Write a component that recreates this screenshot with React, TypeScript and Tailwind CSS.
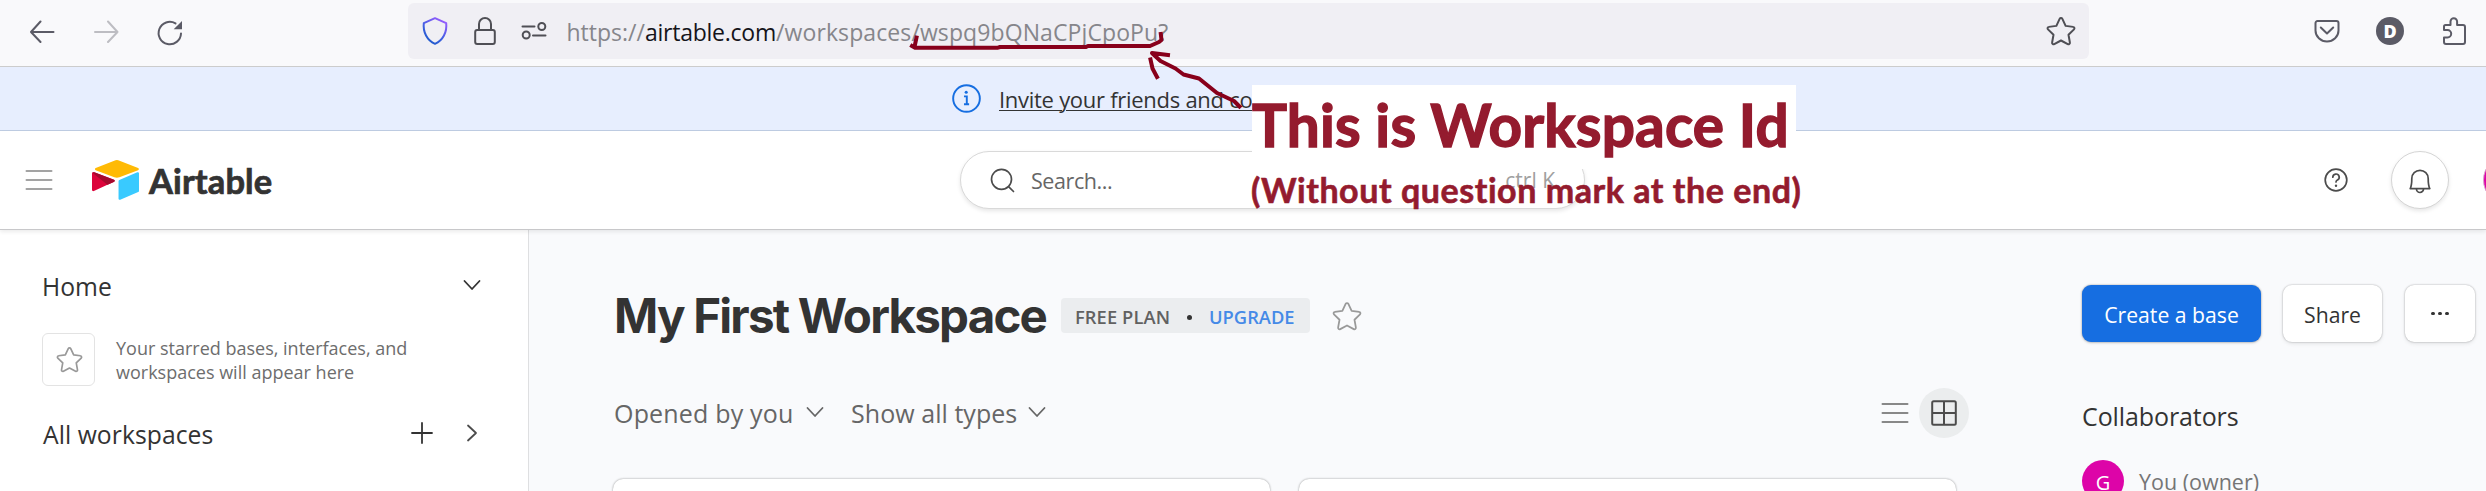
import React from "react";

const STAR =
  "M12 1.6c.5 0 .9.3 1.1.7l2.6 5.6 6 .8c1 .1 1.4 1.3.7 2l-4.4 4.3 1.1 6.2c.2 1-.8 1.7-1.7 1.3L12 19.6l-5.4 2.9c-.9.4-1.9-.3-1.7-1.3L6 15 1.600 10.700c-.7-.7-.3-1.900.7-2l6-.8 2.600-5.600c.2-.4.6-.7 1.100-.7z";

function Star({ className, sw = 1.6 }: { className: string; sw?: number }) {
  return (
    <svg viewBox="0 0 24 24" className={className} fill="none" stroke="currentColor" strokeWidth={sw} strokeLinejoin="round">
      <path d={STAR} />
    </svg>
  );
}

function ChevronDown({ className }: { className: string }) {
  return (
    <svg viewBox="0 0 18 12" className={className} fill="none" stroke="currentColor" strokeWidth="1.8" strokeLinecap="round" strokeLinejoin="round">
      <path d="M1.500 2l7.500 8 7.500-8" />
    </svg>
  );
}

function BrowserBar() {
  return (
    <div className="flex h-[67px] shrink-0 items-start border-b border-[#cccccc] bg-[#f9f9fb] pl-[30px] pt-[3px] text-[#5b5b66]">
      <div className="flex h-14 w-[378px] shrink-0 items-center">
        <svg viewBox="0 0 25 24" className="h-6 w-[25px]" fill="none" stroke="currentColor" strokeWidth="2" strokeLinecap="round" strokeLinejoin="round">
          <path d="M1 13H23.500M10.500 2.500L1 13l9.500 10" />
        </svg>
        <svg viewBox="0 0 25 24" className="ml-[39px] h-6 w-[25px] text-[#bdbdc2]" fill="none" stroke="currentColor" strokeWidth="2" strokeLinecap="round" strokeLinejoin="round">
          <path d="M1 13H23.500M14 2.500L23.500 13 14 23" />
        </svg>
        <svg viewBox="0 0 27 28" className="ml-[37px] mt-1 h-7 w-[27px]" fill="none" stroke="currentColor" strokeWidth="2" strokeLinecap="round">
          <path d="M19.500 4.400A11.200 11.200 0 1 0 25 14.500" />
          <path d="M26 2v8.300h-8.300z" fill="currentColor" stroke="none" />
        </svg>
      </div>
      <div className="flex h-14 w-[1681px] shrink-0 items-center rounded-[6px] bg-[#f0eff4]">
        <svg viewBox="0 0 26 28" className="ml-[14px] h-7 w-[26px]" fill="none">
          <defs>
            <linearGradient id="shield" x1="0.8" y1="0" x2="0.2" y2="1">
              <stop offset="0" stopColor="#9a5cff" />
              <stop offset=".6" stopColor="#3c5fe0" />
              <stop offset="1" stopColor="#1c5ac8" />
            </linearGradient>
          </defs>
          <path d="M13 1.200L24.200 6.200C25.200 15 21 23.500 13 26.800 5 23.500.8 15 1.800 6.200z" stroke="url(#shield)" strokeWidth="2" strokeLinejoin="round" />
        </svg>
        <svg viewBox="0 0 22 28" className="ml-[25.500px] h-7 w-[22px] text-[#4f4f55]" fill="none" stroke="currentColor" strokeWidth="2">
          <rect x="1.200" y="13" width="19.600" height="14" rx="2" />
          <path d="M5 13V7a6 6 0 0 1 12 0v6" />
        </svg>
        <svg viewBox="0 0 26 20" className="ml-[25px] h-5 w-[26px] text-[#4f4f55]" fill="none" stroke="currentColor" strokeWidth="2" strokeLinecap="round">
          <path d="M1.500 5.500h12M12 14.500h12.500" />
          <circle cx="20.800" cy="5.500" r="3.500" />
          <circle cx="5.200" cy="14" r="3.500" />
        </svg>
        <div className="ml-5 flex whitespace-pre pt-0.5 text-[23px] leading-8 text-[#86868b]">
          <span>https://</span>
          <span className="tracking-[-0.24px] text-[#15141a]">airtable.com</span>
          <span className="tracking-[0.1px]">/workspaces/wspq9bQNaCPjCpoPu?</span>
        </div>
        <Star className="ml-auto mr-[13px] size-[30px] text-[#4f4f55]" />
      </div>
      <div className="flex h-14 shrink-0 items-center pl-[225px]">
        <svg viewBox="0 0 26 24" className="h-6 w-[26px]" fill="none" stroke="currentColor" strokeWidth="2" strokeLinecap="round" strokeLinejoin="round">
          <path d="M3.500 2h19a2 2 0 0 1 2 2v7.500a11.500 11 0 0 1-23 0V4a2 2 0 0 1 2-2z" />
          <path d="M6.800 8.500l6.200 6 6.200-6" />
        </svg>
        <div className="ml-9 flex size-7 items-center justify-center rounded-full bg-[#5b5b66] text-[18px] font-extrabold text-white">D</div>
        <svg viewBox="0 0 24 28" className="ml-[38px] h-7 w-6" fill="none" stroke="currentColor" strokeWidth="2" strokeLinejoin="round">
          <path d="M3.500 8h5V4.600a3.300 3.300 0 0 1 6.600 0V8H21a2 2 0 0 1 2 2v15a2 2 0 0 1-2 2H4a2 2 0 0 1-2-2v-4.500h3.500a3.700 3.700 0 0 0 0-7.400H2V9.500A1.500 1.500 0 0 1 3.500 8z" />
        </svg>
      </div>
    </div>
  );
}

function Banner() {
  return (
    <div className="flex h-16 shrink-0 items-center border-b border-[#bfcde3] bg-[#e7eefe] pl-[952px]">
      <svg viewBox="0 0 30 30" className="size-[29px] text-[#166ee1]" fill="none" stroke="currentColor" strokeWidth="2">
        <circle cx="15" cy="15" r="13.800" />
        <path d="M12.400 12.800h2.900v8.200M15.300 21h2.400M12.400 21h3" />
        <circle cx="14.700" cy="8.600" r="1.600" fill="currentColor" stroke="none" />
      </svg>
      <span className="ml-[18px] w-[254px] overflow-hidden whitespace-nowrap pt-px text-[22px] leading-8 tracking-[-0.28px] text-[#333] underline decoration-1 underline-offset-[2px]">
        Invite your friends and co
      </span>
    </div>
  );
}

function Header() {
  return (
    <div className="relative z-10 flex h-[99px] shrink-0 items-center border-b border-[#c8c8ca] bg-white shadow-[0_2px_4px_rgba(0,0,0,0.08)]">
      <svg viewBox="0 0 28 22" className="ml-[25px] h-[22px] w-7 shrink-0 text-[#a3a3a3]" stroke="currentColor" strokeWidth="2" strokeLinecap="round">
        <path d="M1.500 2h25M1.500 11h25M1.500 20h25" />
      </svg>
      <svg viewBox="11 10 167 149" preserveAspectRatio="none" className="ml-[39px] h-10 w-[47px] shrink-0">
        <path fill="#FFBA05" d="M90.039 12.368L24.079 39.660c-3.667 1.519-3.630 6.729.062 8.192l66.235 26.266a24.580 24.580 0 0 0 18.120 0l66.236-26.266c3.690-1.463 3.729-6.673.062-8.192l-65.960-27.292a24.580 24.580 0 0 0-18.795 0" />
        <path fill="#39CAFF" d="M105.312 88.460v65.617c0 3.120 3.147 5.258 6.048 4.108l63.806-28.648a4.420 4.420 0 0 0 2.790-4.108V59.813c0-3.121-3.147-5.258-6.048-4.108l-63.806 28.648a4.420 4.420 0 0 0-2.790 4.108" />
        <path fill="#DC043B" d="M88.078 91.846l-21.904 10.576-2.224 1.075-46.238 22.155c-2.930 1.414-6.672-.722-6.672-3.978V60.088c0-1.178.604-2.195 1.414-2.960a5 5 0 0 1 1.469-1.077c1.400-.84 3.397-1.064 5.096-.392l70.164 27.800c3.566 1.415 3.846 6.412-1.105 8.387" />
        <path fill="#A50A2E" d="M88.078 91.846l-21.904 10.576-53.720-45.295a5 5 0 0 1 1.469-1.077c1.400-.84 3.397-1.064 5.096-.392l70.164 27.800c3.566 1.415 3.846 6.412-1.105 8.387" />
      </svg>
      <span className="ml-[10px] w-[130px] shrink-0 whitespace-nowrap pt-px font-['Lato',sans-serif] text-[34.500px] font-bold leading-10 tracking-[0.1px] text-[#333] [-webkit-text-stroke:0.7px_#333]">Airtable</span>
      <div className="ml-[681px] flex h-[58px] w-[625px] shrink-0 items-center rounded-full border border-[#d9d9d9] bg-white px-[29px] shadow-[0_2px_4px_rgba(0,0,0,0.1)]">
        <svg viewBox="0 0 25 25" className="size-[25px] text-[#4c4c4c]" fill="none" stroke="currentColor" strokeWidth="1.700" strokeLinecap="round">
          <circle cx="11.500" cy="11.300" r="10" />
          <path d="M18.800 18.800l4.700 4.700" />
        </svg>
        <span className="ml-4 pt-0.5 text-[21.500px] tracking-[-0.43px] text-[#666]">Search...</span>
        <span className="ml-auto pt-px text-[21px] text-[#a0a0a0]">ctrl K</span>
      </div>
      <svg viewBox="0 0 24 24" className="ml-[739px] size-6 shrink-0 text-[#4c4c4c]" fill="none" stroke="currentColor" strokeWidth="1.700" strokeLinecap="round">
        <circle cx="12" cy="12" r="10.800" />
        <path d="M8.800 9.200a3.200 3.200 0 1 1 4.600 2.900c-1 .5-1.400 1-1.400 1.900" />
        <circle cx="12" cy="17.700" r="1.200" fill="currentColor" stroke="none" />
      </svg>
      <div className="ml-[43px] flex size-[58px] shrink-0 items-center justify-center rounded-full border border-[#d5d5d5] bg-white shadow-[0_2px_4px_rgba(0,0,0,0.1)]">
        <svg viewBox="0 0 22 26" className="mt-[3px] h-[26px] w-[22px] text-[#4c4c4c]" fill="none" stroke="currentColor" strokeWidth="1.700" strokeLinejoin="round">
          <path d="M1.200 19.600C2.600 17 2.800 14 2.800 9.500a8.200 8.200 0 0 1 16.400 0c0 4.500.2 7.500 1.600 10.100z" />
          <path d="M7.500 20a3.500 3.500 0 0 0 7 0" />
        </svg>
      </div>
      <div className="ml-[34px] size-[50px] shrink-0 rounded-full border border-[#d9a3cd] bg-[#dd04a8]" />
    </div>
  );
}

function Sidebar() {
  return (
    <div className="w-[529px] shrink-0 border-r border-[#dedfe1] bg-white pl-[42px] pt-10">
      <div className="flex h-8 items-center">
        <span className="pt-0.5 text-[24.700px] leading-8 text-[#333]">Home</span>
        <ChevronDown className="-mt-0.5 ml-auto mr-[47px] h-3 w-[18px] text-[#333]" />
      </div>
      <div className="mt-[31px] flex h-[53px] items-center">
        <div className="flex size-[53px] items-center justify-center rounded-[6px] border border-[#e3e3e3]">
          <Star className="ml-px size-[27px] text-[#999]" sw={1.500} />
        </div>
        <p className="ml-[21px] whitespace-nowrap text-[18px] leading-6 text-[#6d6d6d]">
          Your starred bases, interfaces, and
          <br />
          workspaces will appear here
        </p>
      </div>
      <div className="mt-8 flex h-8 items-center text-[#333]">
        <span className="pl-px pt-px text-[24.700px] leading-8 tracking-[0.05px]">All workspaces</span>
        <svg viewBox="0 0 22 22" className="-mt-0.5 ml-auto size-[22px]" fill="none" stroke="currentColor" strokeWidth="1.800" strokeLinecap="round">
          <path d="M11 1v20M1 11h20" />
        </svg>
        <svg viewBox="0 0 12 18" className="-mt-0.5 ml-[33px] mr-[50px] h-[18px] w-3 text-[#4c4c4c]" fill="none" stroke="currentColor" strokeWidth="1.800" strokeLinecap="round" strokeLinejoin="round">
          <path d="M2 1.500l8 7.500-8 7.500" />
        </svg>
      </div>
    </div>
  );
}

const CARD =
  "h-[80px] w-[657px] rounded-[10px] bg-white shadow-[0_0_2px_rgba(0,0,0,0.32),0_0_3px_rgba(0,0,0,0.12)]";

function Workspace() {
  return (
    <div className="flex grow bg-[#f9fafc] pl-[84px] pt-[55px]">
      <div className="w-[1343px] shrink-0">
        <div className="flex h-[57px] items-center pt-1">
          <h1 className="w-[448px] whitespace-nowrap pl-px font-['Inter',sans-serif] text-[47.500px] font-bold leading-[57px] tracking-[-1.800px] text-[#333]">
            My First Workspace
          </h1>
          <div className="flex h-[35px] w-[249px] items-center whitespace-nowrap rounded-[4px] bg-[#ebedef] pl-[14px] pt-[3px] text-[18.300px] font-semibold text-[#616161]">
            <span className="tracking-[0.1px]">FREE PLAN</span>
            <span className="ml-[17px] size-[5px] rounded-full bg-[#333]" />
            <span className="ml-[17px] text-[#458ae7]">UPGRADE</span>
          </div>
          <Star className="ml-[22px] size-[30px] text-[#999]" sw={1.400} />
        </div>
        <div className="mt-[46px] flex h-[49px] items-center text-[25px] text-[#666]">
          <span className="w-[193px] whitespace-nowrap pl-px pt-0.5 tracking-[0.18px]">Opened by you</span>
          <ChevronDown className="-mt-0.5 h-3 w-[18px]" />
          <span className="w-[193px] whitespace-nowrap pl-[27px] pt-0.5 tracking-[0.05px]">Show all types</span>
          <ChevronDown className="-mt-0.5 ml-[11px] h-3 w-[18px]" />
          <svg viewBox="0 0 28 22" className="ml-auto h-[22px] w-7 text-[#888]" stroke="currentColor" strokeWidth="2" strokeLinecap="round">
            <path d="M1.500 2h25M1.500 11h25M1.500 20h25" />
          </svg>
          <div className="ml-[10px] mr-[-13px] flex size-[50px] shrink-0 items-center justify-center rounded-full bg-[#ebedee]">
            <svg viewBox="0 0 26 26" className="size-[26px] text-[#4c4c4c]" fill="none" stroke="currentColor" strokeWidth="2">
              <rect x="1.200" y="1.200" width="23.600" height="23.600" rx="1.500" />
              <path d="M13 1v24M1 13h24" />
            </svg>
          </div>
        </div>
        <div className="mt-[42px] flex gap-[29px]">
          <div className={CARD} />
          <div className={CARD} />
        </div>
      </div>
      <div className="ml-[126px] shrink-0">
        <div className="flex h-[57px] text-[21.200px] font-medium text-[#333]">
          <div className="flex w-[179px] items-center justify-center rounded-[9px] bg-[#166ee1] pt-[3px] text-white shadow-[0_0_2px_rgba(0,0,0,0.35),0_1px_3px_rgba(0,0,0,0.15)]">Create a base</div>
          <div className="ml-[22px] flex w-[99px] items-center justify-center rounded-[9px] bg-white pt-[3px] shadow-[0_0_2px_rgba(0,0,0,0.35),0_2px_4px_rgba(0,0,0,0.08)]">Share</div>
          <div className="ml-[23px] flex w-[70px] items-center justify-center gap-[3.500px] rounded-[9px] bg-white shadow-[0_0_2px_rgba(0,0,0,0.35),0_2px_4px_rgba(0,0,0,0.08)]">
            <span className="size-[3.500px] rounded-full bg-[#333]" />
            <span className="size-[3.500px] rounded-full bg-[#333]" />
            <span className="size-[3.500px] rounded-full bg-[#333]" />
          </div>
        </div>
        <div className="mt-[58px] h-8 text-[25px] leading-8 tracking-[-0.1px] text-[#333]">Collaborators</div>
        <div className="mt-7 flex h-[42px] items-center text-[21.500px] text-[#757575]">
          <div className="flex size-[42px] items-center justify-center rounded-full bg-[#dd04a8] pt-1 text-[20px] text-white">G</div>
          <span className="ml-[15px] pt-[3px]">You (owner)</span>
        </div>
      </div>
    </div>
  );
}

function Annotations() {
  return (
    <div className="pointer-events-none absolute inset-0 z-20 overflow-hidden">
      <svg viewBox="0 0 2486 491" className="absolute inset-0 h-[491px] w-[2486px]" fill="none" stroke="#88001b" strokeWidth="4" strokeLinecap="square" strokeLinejoin="round">
        <path d="M916.500 37.500L914.700 46M912 46l3 1.700h83l2-.7h86l2-1h62l9-4 2.500-2-.7-6" />
        <path d="M1168 55l-16-2 1.500 1.500 7 6.500 15 7.500 8 6 15.500 4 18 14.500 17 8 5.500 5.500M1150.500 59.500l2 9 4.500 8.500" />
      </svg>
      <div className="absolute left-[1252px] top-[85px] h-[84px] w-[544px] whitespace-nowrap bg-white font-['Lato',sans-serif] text-[58.500px] font-bold leading-[78px] tracking-[0.2px] text-[#941b2e] [-webkit-text-stroke:1.4px_#941b2e]">
        This is Workspace Id
      </div>
      <div className="absolute left-[1251px] top-[169px] whitespace-nowrap font-['Lato',sans-serif] text-[34px] font-bold leading-[42px] tracking-[0.55px] text-[#941b2e] [-webkit-text-stroke:0.6px_#941b2e]">
        (Without question mark at the end)
      </div>
    </div>
  );
}

export default function App() {
  return (
    <div className="relative flex h-[491px] w-[2486px] flex-col overflow-hidden bg-white font-['Open_Sans',sans-serif]">
      <BrowserBar />
      <Banner />
      <Header />
      <div className="flex grow overflow-hidden">
        <Sidebar />
        <Workspace />
      </div>
      <Annotations />
    </div>
  );
}
